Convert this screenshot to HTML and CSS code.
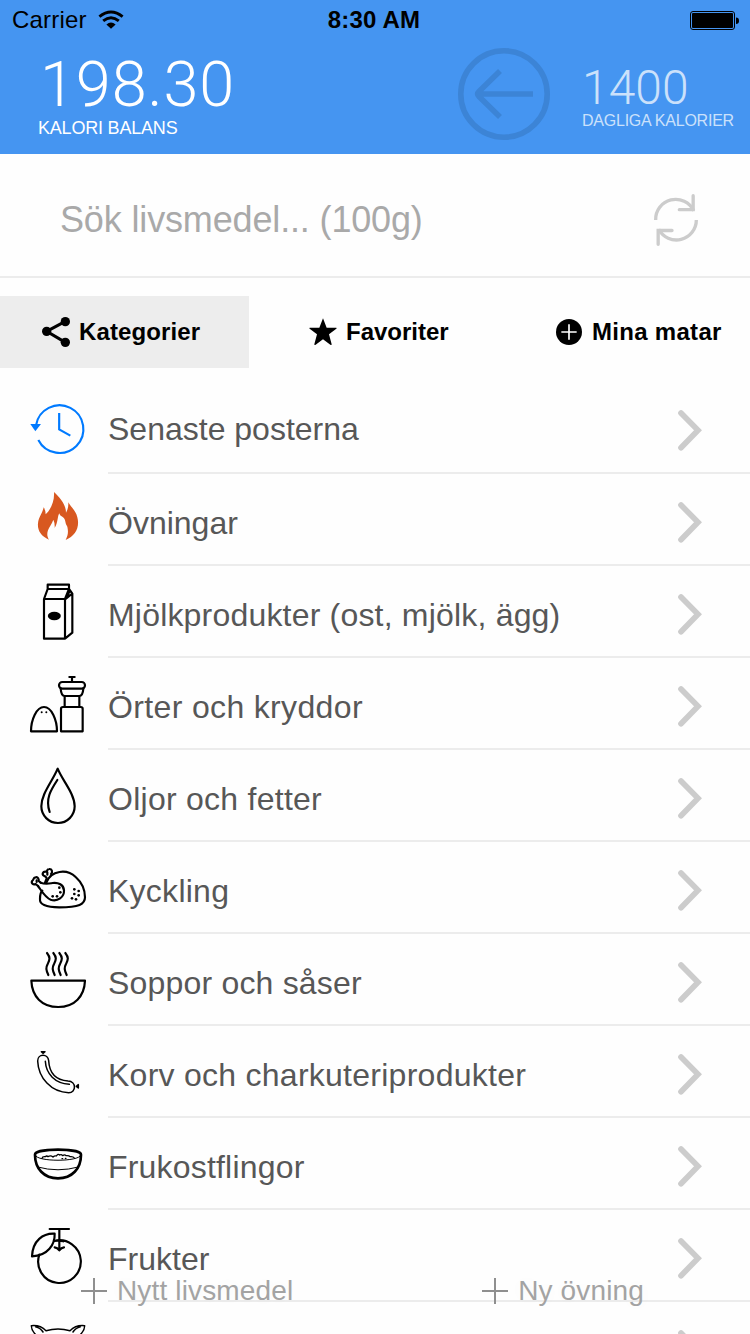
FILE: index.html
```html
<!DOCTYPE html>
<html lang="sv">
<head>
<meta charset="utf-8">
<title>Kalori balans</title>
<link rel="stylesheet" href="styles.css">
</head>
<body>
<div class="screen">
  <header class="header">
    <div class="status">
      <div class="carrier"><span>Carrier</span>
        <svg class="wifi" viewBox="0 0 26 20"><g fill="none" stroke="#000" stroke-width="2.9"><path d="M1.4 6.6Q13 -2.6 24.6 6.6"/><path d="M5.2 10.9Q13 4.4 20.800 10.900"/></g><path d="M8.400 14.400Q13 10.400 17.600 14.400L13 18.800Z"/></svg>
      </div>
      <div class="time">8:30 AM</div>
      <svg class="battery" viewBox="0 0 50 20"><rect x=".5" y=".5" width="44" height="18" rx="2.500" fill="none" stroke="#000"/><rect x="2" y="2" width="41" height="15" rx="1"/><path d="M46 6.500Q49 6.500 49 9.700Q49 13 46 13Z"/></svg>
    </div>
    <div class="summary">
      <div class="balance"><div class="balance-value">198.30</div><div class="balance-label">KALORI BALANS</div></div>
      <svg class="back" viewBox="0 0 92 92"><g fill="none" stroke="#3c84d6" stroke-width="5.600"><circle cx="46" cy="46" r="43.200"/><path d="M75 46H20M42 23L21 43.500Q18.500 46 21 48.500L42 69"/></g></svg>
      <div class="daily"><div class="daily-value">1400</div><div class="daily-label">DAGLIGA KALORIER</div></div>
    </div>
  </header>
  <div class="search">
    <span class="search-text">Sök livsmedel... (100g)</span>
    <svg class="refresh" viewBox="0 0 144 162"><g fill="none" stroke="#ccc" stroke-width="10"><path d="M11 81A60 60 0 0 1 125 53"/><path d="M133 81A60 60 0 0 1 20 109"/><g stroke-linecap="round"><path d="M123.500 8V50H82"/><path d="M18.500 154V112.500H60"/></g></g></svg>
  </div>
  <nav class="tabs">
    <div class="tab tab-active"><svg class="ic-share" viewBox="0 0 84 90"><path d="M70 13L14 43L70 76" fill="none" stroke="#000" stroke-width="9"/><circle cx="70" cy="14" r="14"/><circle cx="14" cy="43" r="14"/><circle cx="70" cy="76" r="14"/></svg><span>Kategorier</span></div>
    <div class="tab tab-fav"><svg class="ic-star" viewBox="0 0 84 84"><path d="M42 1L53 29L82 29Q84 30 82 32L60 49L68 79Q68 83 64 80L42 64L20 80Q16 83 16 79L24 49L2 32Q0 30 2 29L31 29Z"/></svg><span>Favoriter</span></div>
    <div class="tab tab-mina"><svg class="ic-plus" viewBox="0 0 78 78"><circle cx="39" cy="39" r="39"/><path d="M39 16V62M16 39H62" stroke="#fff" stroke-width="5"/></svg><span>Mina matar</span></div>
  </nav>
  <main class="list">
    <div class="row row-first">
      <svg class="icon" viewBox="0 -24 240 270"><g fill="none" stroke="#007aff" stroke-width="6.500"><path d="M48 106A71.500 71.500 0 1 1 55 150"/><path d="M117.500 69V118L151 137"/></g><path d="M31 102H63L46 124Z" fill="#007aff"/></svg>
      <div class="cell"><span>Senaste posterna</span><svg class="chev" viewBox="0 0 72 122"><path d="M9 9L60 61L9 113"/></svg></div>
    </div>
    <div class="row">
      <svg class="icon" viewBox="0 252 240 270"><path fill="#d85820" d="M102 306C118 322 138 342 138 368Q146 355 145 337C153 352 168 362 172 382C180 412 166 438 137 450C145 434 145 424 142 410Q137 404 135 391C133 380 119 380 118 370C112 378 115 396 104 414Q105 399 100 389C96 402 87 412 84 421C80 433 82 441 87 449C62 438 52 420 54 400C56 380 67 371 71 352Q77 361 77 373C93 358 104 333 102 306Z"/></svg>
      <div class="cell"><span>Övningar</span><svg class="chev" viewBox="0 0 72 122"><path d="M9 9L60 61L9 113"/></svg></div>
    </div>
    <div class="row">
      <svg class="icon" viewBox="0 -12 240 270"><g class="ln"><path d="M72 87H135V206H72ZM72 87L83 57H147L135 87M83 57V44H147V57M147 57L157 71V188L135 206M137 87L156 71M150 62L141 78"/></g><ellipse cx="103" cy="138" rx="19.500" ry="12.500"/></svg>
      <div class="cell"><span class="ls-s">Mjölkprodukter (ost, mjölk, ägg)</span><svg class="chev" viewBox="0 0 72 122"><path d="M9 9L60 61L9 113"/></svg></div>
    </div>
    <div class="row">
      <svg class="icon" viewBox="0 264 240 270"><g class="ln"><path d="M33 484C33 450 49 411 72 411S111 450 111 484Z"/><path d="M123 484V416Q123 411 129 411H182Q188 411 188 416V484ZM134 410V380M178 410V380"/><path d="M122 356C123 370 125 378 134 378H178C187 378 189 370 190 356"/><rect x="117" y="336" width="78" height="20" rx="10"/><path d="M156 333V322M148 321H164"/></g><circle cx="65" cy="427" r="3"/><circle cx="79" cy="427" r="3"/></svg>
      <div class="cell"><span class="ls-l">Örter och kryddor</span><svg class="chev" viewBox="0 0 72 122"><path d="M9 9L60 61L9 113"/></svg></div>
    </div>
    <div class="row">
      <svg class="icon" viewBox="0 -15 240 270"><g class="ln"><path d="M113 41C98 78 64 116 64 154A50 50 0 0 0 164 154C164 116 128 78 113 41Z"/><path d="M112 75C93 104 75 132 89 171"/></g></svg>
      <div class="cell"><span class="ls-m">Oljor och fetter</span><svg class="chev" viewBox="0 0 72 122"><path d="M9 9L60 61L9 113"/></svg></div>
    </div>
    <div class="row">
      <svg class="icon" viewBox="0 261 240 270"><g class="ln"><path d="M79 383C93 345 141 341 167 366C186 383 195 407 195 427C195 448 177 457 118 457C76 457 58 447 60 432C60 418 61 412 67 407"/><path d="M54 393C65 408 76 428 92 434C113 441 133 426 132 406C131 389 115 382 98 384C84 386 76 388 62 383"/><path d="M54 393L47 387C40 391 32 384 37 377C42 375 38 368 47 367C54 365 57 373 56 378L62 383"/><path d="M75 383L80 370M93 357C99 351 96 341 87 342C80 342 83 351 77 350C68 349 65 359 72 362C77 364 77 364 80 369M50 376V381M82 352V359"/></g><g><circle cx="118" cy="398" r="4"/><circle cx="121" cy="412" r="4"/><circle cx="98" cy="424" r="4"/><circle cx="111" cy="424" r="4"/><circle cx="163" cy="403" r="4"/><circle cx="176" cy="408" r="4"/><circle cx="163" cy="417" r="4"/><circle cx="176" cy="421" r="4"/><circle cx="156" cy="430" r="4"/><circle cx="168" cy="433" r="4"/></g></svg>
      <div class="cell"><span class="ls-m">Kyckling</span><svg class="chev" viewBox="0 0 72 122"><path d="M9 9L60 61L9 113"/></svg></div>
    </div>
    <div class="row">
      <svg class="icon" viewBox="0 -18 240 270"><g class="ln"><path d="M34 122H195C193 169 164 201 114.500 201S36 169 34 122Z"/><path d="M81 39C93 54 88 61 83 72C77 83 78 90 85 105M100 39C112 54 107 61 102 72C96 83 97 90 104 105M118 39C130 54 125 61 120 72C114 83 115 90 122 105M136 39C148 54 143 61 138 72C132 83 133 90 140 105"/></g></svg>
      <div class="cell"><span class="ls-s">Soppor och såser</span><svg class="chev" viewBox="0 0 72 122"><path d="M9 9L60 61L9 113"/></svg></div>
    </div>
    <div class="row">
      <svg class="icon" viewBox="0 258 240 270"><g class="ln thin"><path d="M53 363C53 340 84 340 86 362C88 398 108 420 144 423C170 424 169 458 146 458C94 457 55 414 53 363Z"/><path d="M76 364C78 402 105 430 148 433"/><path d="M64 335H75L69 340ZM175 434V444L169 439Z"/></g></svg>
      <div class="cell"><span class="ls-m">Korv och charkuteriprodukter</span><svg class="chev" viewBox="0 0 72 122"><path d="M9 9L60 61L9 113"/></svg></div>
    </div>
    <div class="row">
      <svg class="icon" viewBox="0 -36 240 270"><g class="ln"><path stroke-width="8" d="M45 74C45 54 183 54 183 74C183 116 156 145 114 145S45 116 45 74Z"/><path stroke-width="3" d="M46 76C50 96 178 96 182 76M53 111Q114 128 175 111"/><path stroke-width="4" d="M66 85Q67 79 76 80Q80 76 84 80Q92 75 99 81Q104 76 109 78Q114 70 119 75Q124 72 128 77Q134 72 138 77Q147 76 150 80Q160 79 163 84M126 86H128M136 85H138"/></g></svg>
      <div class="cell"><span class="ls-s">Frukostflingor</span><svg class="chev" viewBox="0 0 72 122"><path d="M9 9L60 61L9 113"/></svg></div>
    </div>
    <div class="row">
      <svg class="icon" viewBox="0 240 240 270"><g class="ln"><path d="M58 374A64 64 0 1 0 102 333Q117 330 130 334"/><path d="M36 379C38 332 69 309 104 311C105 343 84 377 36 379ZM89 297H147M118 297V361M104 352Q112 353 118 361Q124 353 132 352"/></g></svg>
      <div class="cell"><span>Frukter</span><svg class="chev" viewBox="0 0 72 122"><path d="M9 9L60 61L9 113"/></svg></div>
    </div>
    <div class="row">
      <svg class="icon" viewBox="0 516 240 270"><g class="ln thin"><path d="M51 618Q34 602 34 587Q60 584 78 602Q114 592 150 602Q168 584 194 587Q194 602 177 618M47 590Q62 594 69 606M181 590Q166 594 159 606"/></g></svg>
      <div class="cell"><span></span><svg class="chev" viewBox="0 0 72 122"><path d="M9 9L60 61L9 113"/></svg></div>
    </div>
  </main>
  <footer class="actions">
    <div class="action"><svg viewBox="0 0 26 26"><path d="M13 0V26M0 13H26"/></svg><span>Nytt livsmedel</span></div>
    <div class="action"><svg viewBox="0 0 26 26"><path d="M13 0V26M0 13H26"/></svg><span>Ny övning</span></div>
  </footer>
</div>
</body>
</html>
```
FILE: styles.css
```css
* { box-sizing: border-box; }
body { margin: 0; background: #fefefe; font-family: "Liberation Sans", Arial, sans-serif; color: #000; }
svg { display: block; flex: none; }
span { white-space: nowrap; }
.screen { position: relative; width: 750px; height: 1334px; overflow: hidden; }

.header { height: 154px; background: #4595f1; }
.status { display: grid; grid-template-columns: 1fr auto 1fr; height: 40px; padding: 0 10px; align-items: center; font-size: 24px; line-height: 40px; }
.carrier { display: flex; align-items: center; gap: 11px; padding-left: 2px; letter-spacing: 0.2px; }
.wifi { width: 26px; height: 20px; }
.time { font-weight: bold; font-size: 24px; letter-spacing: 0.2px; margin-right: 2px; }
.battery { width: 50px; height: 20px; margin-top: 1px; justify-self: end; }
.summary { display: flex; height: 114px; color: #fff; }
.balance { width: 420px; padding: 13px 0 0 38px; }
.balance-value { padding-left: 2px; font: 300 63px/64px Roboto, sans-serif; letter-spacing: 0.9px; }
.balance-label { font-size: 18px; line-height: 22px; letter-spacing: -0.2px; }
.back { width: 92px; height: 92px; margin: 8px 32px 0 38px; }
.daily { padding-top: 21px; color: #cbe1fb; }
.daily-value { font: 300 48px/54px Roboto, sans-serif; }
.daily-label { font-size: 16px; line-height: 12px; letter-spacing: -0.23px; white-space: nowrap; }

.search { display: flex; justify-content: space-between; height: 124px; padding: 10px 50px 0 60px; align-items: center; border-bottom: 2px solid #ececec; }
.search-text { font-size: 36px; letter-spacing: -0.15px; color: #a9a9a9; }
.refresh { width: 48px; height: 54px; }

.tabs { display: grid; grid-template-columns: 249px 252px 249px; height: 72px; margin-top: 18px; font-size: 24px; font-weight: bold; }
.tab { display: flex; align-items: center; }
.tab-active { background: #ededed; padding-left: 42px; gap: 9px; letter-spacing: 0.12px; }
.tab-fav { padding-left: 60px; gap: 9px; }
.tab-mina { padding-left: 55px; gap: 10px; letter-spacing: 0.3px; }
.ic-share { width: 28px; height: 30px; }
.ic-star { width: 28px; height: 28px; }
.ic-plus { width: 26px; height: 26px; }

.list { margin-top: 14px; }
.row { display: flex; height: 92px; padding-left: 20px; gap: 8px; }
.icon { width: 80px; height: 90px; }
.cell { flex: 1; display: flex; justify-content: space-between; align-items: center; padding: 8px 48px 0 0; border-bottom: 2px solid #ececec; font-size: 32px; color: #575757; }
.row-first span { padding-bottom: 4px; }
.ls-s { letter-spacing: 0.19px; }
.ls-m { letter-spacing: 0.26px; }
.ls-l { letter-spacing: 0.35px; }
.chev { width: 24px; height: 40.700px; margin-top: -1px; overflow: visible; }
.chev path { fill: none; stroke: #ccc; stroke-width: 17; stroke-linecap: round; }
.ln { fill: none; stroke: #000; stroke-width: 6.500; stroke-linecap: round; stroke-linejoin: round; }
.thin { stroke-width: 4.500; }

.actions { position: absolute; left: 81px; right: 106px; bottom: 24px; display: flex; justify-content: space-between; font-size: 28px; line-height: 38px; color: #a3a3a3; }
.action { display: flex; align-items: center; gap: 10px; letter-spacing: 0.15px; text-shadow: 0 0 16px rgba(0,0,0,.04); }
.action svg { width: 26px; height: 26px; fill: none; stroke: #8f8f8f; stroke-width: 2; }
```
